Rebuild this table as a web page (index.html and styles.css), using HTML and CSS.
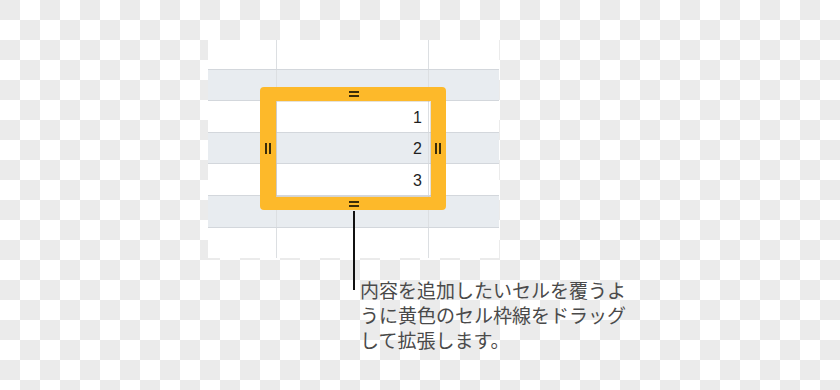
FILE: index.html
```html
<!DOCTYPE html>
<html lang="ja">
<head>
<meta charset="utf-8">
<link rel="stylesheet" href="styles.css">
</head>
<body>
<div class="figure">
  <div class="sheet">
    <div class="row r30"><div class="c c1"></div><div class="c c2"></div><div class="c c3"></div></div>
    <div class="row alt r31"><div class="c c1"></div><div class="c c2"></div><div class="c c3"></div></div>
    <div class="row r32"><div class="c c1"></div><div class="c c2 num">1</div><div class="c c3"></div></div>
    <div class="row alt r31"><div class="c c1"></div><div class="c c2 num">2</div><div class="c c3"></div></div>
    <div class="row r32"><div class="c c1"></div><div class="c c2 num">3</div><div class="c c3"></div></div>
    <div class="row alt r32"><div class="c c1"></div><div class="c c2"></div><div class="c c3"></div></div>
    <div class="row r30 last"><div class="c c1"></div><div class="c c2"></div><div class="c c3"></div></div>

    <div class="frame">
      <span class="h-handle top"></span>
      <span class="h-handle bottom"></span>
      <span class="v-handle left"></span>
      <span class="v-handle right"></span>
    </div>
    <div class="pointer"></div>
  </div>
  <p class="callout">内容を追加したいセルを覆うよ<br>うに黄色のセル枠線をドラッグ<br>して拡張します。</p>
</div>
</body>
</html>
```

FILE: styles.css
```css
html, body {
  margin: 0;
  padding: 0;
}
body {
  width: 840px;
  height: 390px;
  overflow: hidden;
  background-color: #ffffff;
  background-image: repeating-conic-gradient(#ffffff 0deg 90deg, #ebebeb 90deg 180deg);
  background-size: 40px 40px;
  background-position: 0 0;
}
.figure {
  padding: 40px 0 0 208px;
}
.sheet {
  position: relative;
  width: 291px;
  background: #ffffff;
}
.row {
  display: flex;
  background: #ffffff;
  border-bottom: 1px solid #d3d7dc;
  box-sizing: border-box;
}
.row.alt {
  background: #e8ecf0;
}
.row.last {
  border-bottom: none;
}
.r30 { height: 30px; }
.r31 { height: 31px; }
.r32 { height: 32px; }
.c {
  box-sizing: border-box;
  height: 100%;
}
.c1 { width: 69px; border-right: 1px solid #dcdfe2; }
.c2 { width: 152px; border-right: 1px solid #dcdfe2; }
.c3 { flex: 1; }
.num {
  display: flex;
  align-items: center;
  justify-content: flex-end;
  padding: 2px 6px 0 0;
  font-family: "Liberation Sans", Arial, sans-serif;
  font-size: 16px;
  color: #1f1f1f;
}
.frame {
  position: absolute;
  left: 52px;
  top: 47px;
  width: 186px;
  height: 123px;
  box-sizing: border-box;
  border-style: solid;
  border-color: #fdb92a;
  border-width: 14px 15px 13px 16px;
  border-radius: 4px;
  box-shadow: inset 0 0 0 1px rgba(180, 170, 150, 0.35);
}
.h-handle {
  position: absolute;
  left: 50%;
  width: 10px;
  height: 6px;
  margin-left: -5px;
  border-top: 2px solid #3b2c08;
  border-bottom: 2px solid #3b2c08;
  box-sizing: border-box;
}
.h-handle.top { top: -10px; }
.h-handle.bottom { bottom: -10px; }
.v-handle {
  position: absolute;
  top: 50%;
  width: 6px;
  height: 11px;
  margin-top: -6px;
  border-left: 2px solid #3b2c08;
  border-right: 2px solid #3b2c08;
  box-sizing: border-box;
}
.v-handle.left { left: -11px; }
.v-handle.right { right: -10px; }
.pointer {
  position: absolute;
  left: 145px;
  top: 171px;
  width: 2px;
  height: 79px;
  background: #111111;
}
.callout {
  margin: 19px 0 0 152px;
  font-family: "Noto Sans CJK JP", sans-serif;
  font-size: 19px;
  letter-spacing: 0;
  line-height: 25px;
  color: #4a4a4a;
}
```
